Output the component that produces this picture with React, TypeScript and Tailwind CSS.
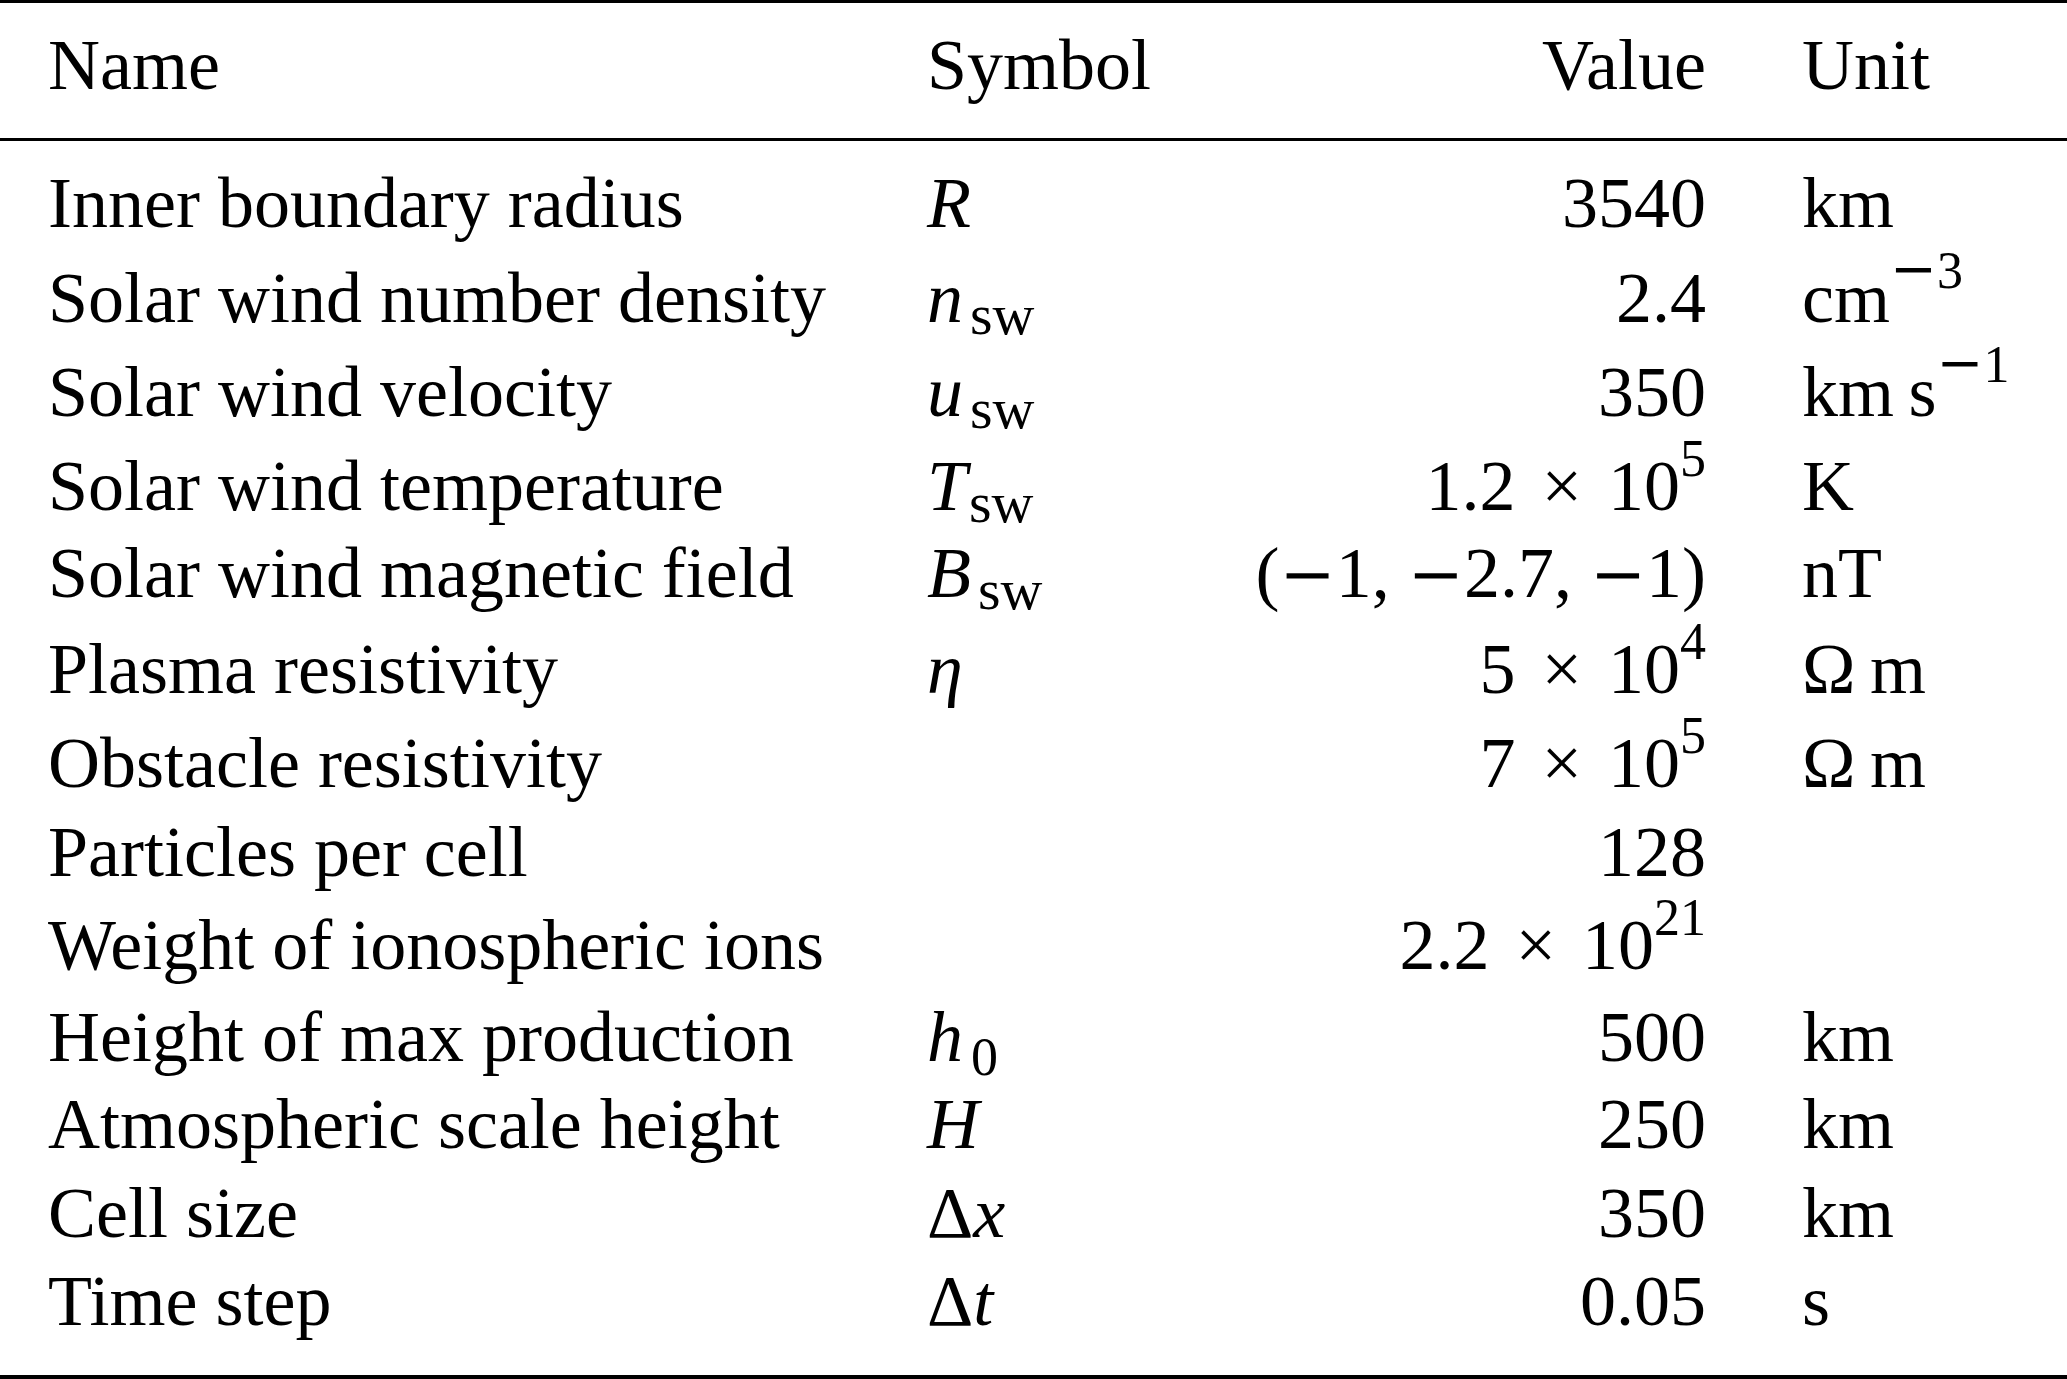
import React from "react";

const Sup = ({ children }: { children: React.ReactNode }) => (
  <span className="relative -top-[34px] text-[52px] leading-[0]">{children}</span>
);

const Sub = ({ children, tight }: { children: React.ReactNode; tight?: boolean }) => (
  <span className={`relative top-[12px] text-[58px] leading-[0] ${tight ? "ml-[2px]" : "ml-[7px]"}`}>{children}</span>
);

const Minus = () => (
  <span className="font-['DejaVu_Serif',serif] text-[67px] leading-[0]">−</span>
);

const SupMinus = () => (
  <span className="font-['DejaVu_Serif',serif] text-[56px] leading-[0]">−</span>
);

const Times = () => <span className="mx-[8px]">×</span>;

const I = ({ children }: { children: React.ReactNode }) => <span className="italic">{children}</span>;

type Row = {
  name: string;
  sym: React.ReactNode;
  val: React.ReactNode;
  unit: React.ReactNode;
  h: string;
};

const rows: Row[] = [
  { name: "Inner boundary radius", sym: <I>R</I>, val: "3540", unit: "km", h: "h-[95px]" },
  {
    name: "Solar wind number density",
    sym: (
      <>
        <I>n</I>
        <Sub>sw</Sub>
      </>
    ),
    val: "2.4",
    unit: (
      <>
        cm
        <Sup>
          <SupMinus />3
        </Sup>
      </>
    ),
    h: "h-[94px]",
  },
  {
    name: "Solar wind velocity",
    sym: (
      <>
        <I>u</I>
        <Sub>sw</Sub>
      </>
    ),
    val: "350",
    unit: (
      <>
        km{"\u2009"}s
        <Sup>
          <SupMinus />1
        </Sup>
      </>
    ),
    h: "h-[94px]",
  },
  {
    name: "Solar wind temperature",
    sym: (
      <>
        <I>T</I>
        <Sub tight>sw</Sub>
      </>
    ),
    val: (
      <>
        1.2 <Times /> 10<Sup>5</Sup>
      </>
    ),
    unit: "K",
    h: "h-[87px]",
  },
  {
    name: "Solar wind magnetic field",
    sym: (
      <>
        <I>B</I>
        <Sub>sw</Sub>
      </>
    ),
    val: (
      <>
        (<Minus />1, <Minus />2.7, <Minus />1)
      </>
    ),
    unit: "nT",
    h: "h-[96px]",
  },
  {
    name: "Plasma resistivity",
    sym: <I>η</I>,
    val: (
      <>
        5 <Times /> 10<Sup>4</Sup>
      </>
    ),
    unit: "Ω\u2009m",
    h: "h-[94px]",
  },
  {
    name: "Obstacle resistivity",
    sym: "",
    val: (
      <>
        7 <Times /> 10<Sup>5</Sup>
      </>
    ),
    unit: "Ω\u2009m",
    h: "h-[89px]",
  },
  { name: "Particles per cell", sym: "", val: "128", unit: "", h: "h-[93px]" },
  {
    name: "Weight of ionospheric ions",
    sym: "",
    val: (
      <>
        2.2 <Times /> 10<Sup>21</Sup>
      </>
    ),
    unit: "",
    h: "h-[92px]",
  },
  {
    name: "Height of max production",
    sym: (
      <>
        <I>h</I>
        <span className="relative top-[14px] ml-[8px] text-[54px] leading-[0]">0</span>
      </>
    ),
    val: "500",
    unit: "km",
    h: "h-[87px]",
  },
  { name: "Atmospheric scale height", sym: <I>H</I>, val: "250", unit: "km", h: "h-[89px]" },
  {
    name: "Cell size",
    sym: (
      <>
        Δ<I>x</I>
      </>
    ),
    val: "350",
    unit: "km",
    h: "h-[88px]",
  },
  {
    name: "Time step",
    sym: (
      <>
        Δ<I>t</I>
      </>
    ),
    val: "0.05",
    unit: "s",
    h: "h-[88px]",
  },
];

const RowLine = ({ r }: { r: Row }) => (
  <div className={`grid grid-cols-[879px_223px_556px_1fr] pl-[48px] ${r.h}`}>
    <div className="whitespace-nowrap">{r.name}</div>
    <div className="whitespace-nowrap">{r.sym}</div>
    <div className="whitespace-nowrap text-right">{r.val}</div>
    <div className="whitespace-nowrap pl-[96px]">{r.unit}</div>
  </div>
);

export default function App() {
  return (
    <div className="w-[2067px] h-[1379px] overflow-hidden bg-white text-black font-['Liberation_Serif',serif] text-[72px] leading-[88px]">
      <div className="h-[3px] bg-black" />
      <div className="mt-[18px] grid h-[88px] grid-cols-[879px_223px_556px_1fr] pl-[48px]">
        <div>Name</div>
        <div>Symbol</div>
        <div className="text-right">Value</div>
        <div className="pl-[96px]">Unit</div>
      </div>
      <div className="mt-[29px] h-[3px] bg-black" />
      <div className="mt-[18px] flex flex-col">
        {rows.map((r) => (
          <RowLine key={r.name} r={r} />
        ))}
      </div>
      <div className="mt-[30px] h-[4px] bg-black" />
    </div>
  );
}
